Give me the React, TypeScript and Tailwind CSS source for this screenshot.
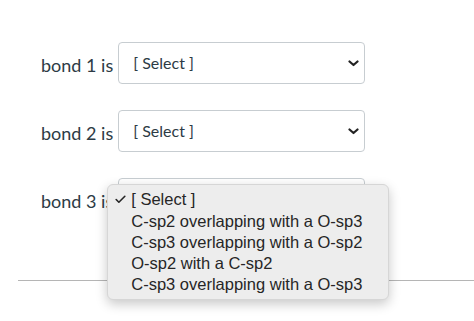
import { Check } from "lucide-react";

const options = [
  "[ Select ]",
  "C-sp2 overlapping with a O-sp3",
  "C-sp3 overlapping with a O-sp2",
  "O-sp2 with a C-sp2",
  "C-sp3 overlapping with a O-sp3",
];

function Chevron() {
  return (
    <svg width="11" height="7" viewBox="0 0 11 7" className="text-[#222]">
      <path d="M1.5 1.5 L5.5 5 L9.5 1.5" fill="none" stroke="currentColor" strokeWidth="2.2" strokeLinecap="round" strokeLinejoin="round" />
    </svg>
  );
}

function FakeSelect({ open }: { open?: boolean }) {
  return (
    <div className="relative">
      <div className="w-[247px] h-[42px] border border-[#c7cdd1] rounded-[4px] bg-white flex items-center justify-between pl-[14px] pr-[5px]">
        <span className="text-[16px] text-[#2d3b45]">[ Select ]</span>
        <Chevron />
      </div>

      {/* native dropdown menu (open) */}
      {open && (
        <div className="absolute left-[-11px] top-[6px] w-[282px] h-[116px] bg-[#ededed] rounded-[6px] border border-[#d6d6d6] shadow-[0_4px_12px_rgba(0,0,0,0.22)] pt-[4px] font-['Liberation_Sans',Arial,sans-serif] text-[16.5px] text-[#262626] z-10">
          {options.map((o, i) => (
            <div key={o} className="h-[21.25px] flex items-center">
              <span className="w-[23px] flex justify-end pr-[4px]">
                {i === 0 && <Check className="w-[13px] h-[13px]" strokeWidth={3} />}
              </span>
              <span>{o}</span>
            </div>
          ))}
        </div>
      )}
    </div>
  );
}

export default function App() {
  return (
    <div className="w-[474px] h-[321px] bg-white overflow-hidden font-['Lato','Liberation_Sans',sans-serif]">
      <div className="pt-[42px] pl-[41px] flex flex-col gap-[26px]">
        {[1, 2, 3].map((n) => (
          <div key={n} className="flex items-center gap-[5px]">
            <span className="text-[18px] text-[#2d3b45] pt-[5px]">bond {n} is</span>
            <FakeSelect open={n === 3} />
          </div>
        ))}
      </div>
      <div className="ml-[18px] mt-[60px] border-t border-[#b5b5b5]" />
    </div>
  );
}
